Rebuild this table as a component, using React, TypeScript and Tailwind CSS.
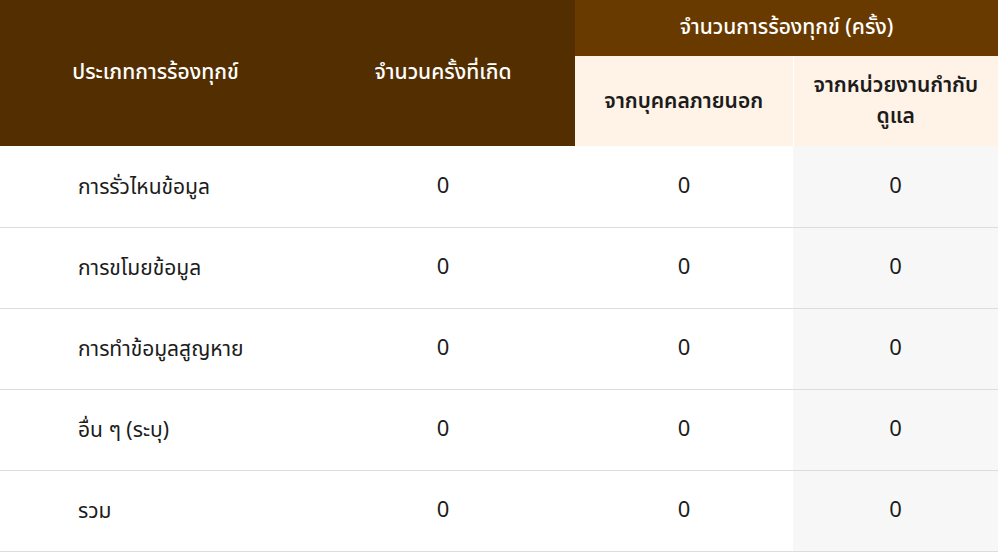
const ROWS = [
  { label: 'การรั่วไหนข้อมูล', total: 0, outside: 0, regulator: 0 },
  { label: 'การขโมยข้อมูล', total: 0, outside: 0, regulator: 0 },
  { label: 'การทำข้อมูลสูญหาย', total: 0, outside: 0, regulator: 0 },
  { label: 'อื่น ๆ (ระบุ)', total: 0, outside: 0, regulator: 0 },
  { label: 'รวม', total: 0, outside: 0, regulator: 0 },
];

export default function App() {
  return (
    <div className="min-h-[553px] bg-white font-['Noto_Sans_Thai','Noto_Sans',sans-serif] text-[#1c1c1c]">
      <table className="w-[998px] table-fixed border-collapse">
        <colgroup>
          <col className="w-[311px]" />
          <col className="w-[264px]" />
          <col className="w-[218px]" />
          <col className="w-[205px]" />
        </colgroup>
        <thead>
          <tr className="h-[56px]">
            <th rowSpan={2} className="bg-[#532e00] text-center text-[21px] font-medium text-white">
              ประเภทการร้องทุกข์
            </th>
            <th rowSpan={2} className="bg-[#532e00] text-center text-[21px] font-medium text-white">
              จำนวนครั้งที่เกิด
            </th>
            <th colSpan={2} className="bg-[#693a00] text-center text-[21px] font-medium text-white">
              จำนวนการร้องทุกข์ (ครั้ง)
            </th>
          </tr>
          <tr className="h-[90px]">
            <th className="border-r border-white bg-[#fff2e6] px-3 text-center text-[21px] font-semibold leading-[31px]">
              จากบุคคลภายนอก
            </th>
            <th className="bg-[#fff2e6] px-3 text-center text-[21px] font-semibold leading-[31px]">
              จากหน่วยงานกำกับดูแล
            </th>
          </tr>
        </thead>
        <tbody>
          {ROWS.map((row) => (
            <tr key={row.label} className="h-[81px] border-b border-[#dddddd]">
              <td className="pl-[78px] pt-[3px] text-[21px]">{row.label}</td>
              <td className="text-center text-[22px]">{row.total}</td>
              <td className="text-center text-[22px]">{row.outside}</td>
              <td className="bg-[#f7f7f7] text-center text-[22px]">{row.regulator}</td>
            </tr>
          ))}
        </tbody>
      </table>
    </div>
  );
}
